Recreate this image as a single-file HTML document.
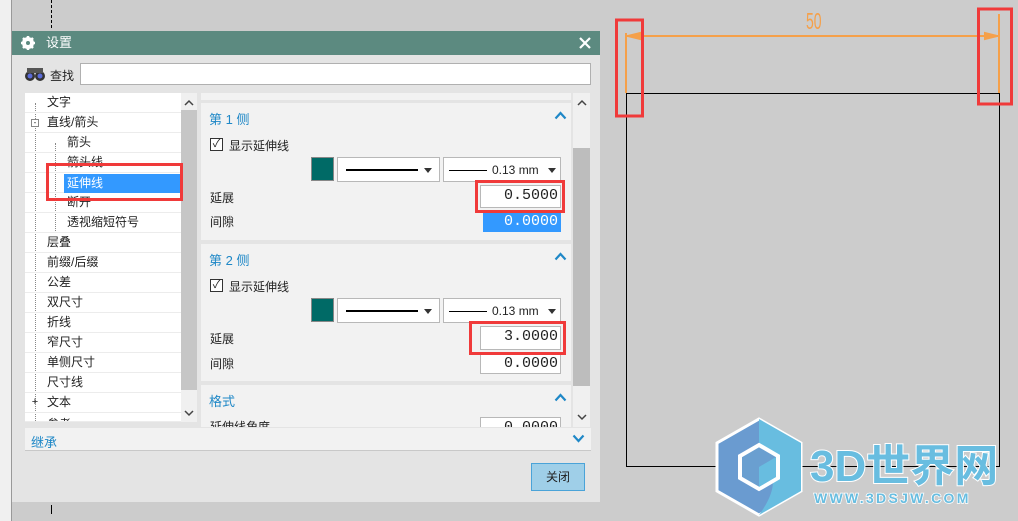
<!DOCTYPE html>
<html><head><meta charset="utf-8"><style>
*{margin:0;padding:0;box-sizing:border-box}
body{width:1018px;height:521px;background:#cccccc;position:relative;overflow:hidden;font-family:"Liberation Sans","Noto Sans CJK SC",sans-serif;font-size:12px;color:#222}
.a{position:absolute}
.row{position:absolute;left:25px;width:156px;height:20px;border-bottom:1px solid #ececec;line-height:19px;white-space:nowrap}
.sec{position:absolute;left:201px;width:370px;background:#f2f2f2}
.h{color:#1f88c7;font-size:13px}
.inp{position:absolute;background:#fff;border:1px solid #b8b8b8;text-align:right;font-family:"Liberation Mono","Noto Sans CJK SC",monospace;font-size:15px;line-height:20px;padding-right:2px;overflow:hidden;white-space:nowrap}
.dd{position:absolute;background:#fff;border:1px solid #b8b8b8;height:25px}
.rb{position:absolute;border:3px solid #f03a3a}
</style></head><body>
<div class="a" style="left:0;top:0;width:12px;height:521px;background:#f0f0f0;border-right:1px solid #999"></div>
<div class="a" style="left:51px;top:0;height:28px;border-left:1px dashed #000"></div>
<div class="a" style="left:51px;top:505px;height:9px;border-left:1px solid #000"></div>
<!-- dialog -->
<div class="a" style="left:12px;top:31px;width:588px;height:471px;background:#e4e4e4"></div>
<div class="a" style="left:12px;top:31px;width:588px;height:24px;background:#5c8a80;color:#fff;font-size:13px;line-height:24px">
<svg class="a" style="left:9px;top:5px" width="14" height="14" viewBox="0 0 14 14"><circle cx="7" cy="7" r="4.5" fill="none" stroke="#fff" stroke-width="3"/><g stroke="#fff" stroke-width="2.5"><line x1="7" y1="0" x2="7" y2="14"/><line x1="0" y1="7" x2="14" y2="7"/><line x1="2" y1="2" x2="12" y2="12"/><line x1="12" y1="2" x2="2" y2="12"/></g><circle cx="7" cy="7" r="2" fill="#5c8a80"/></svg>
<span class="a" style="left:34px">设置</span>
<svg class="a" style="left:567px;top:6px" width="12" height="12"><path d="M1 1L11 11M11 1L1 11" stroke="#fff" stroke-width="2.2"/></svg></div>
<svg class="a" style="left:24px;top:66px" width="22" height="16"><circle cx="6" cy="10" r="5" fill="#333"/><circle cx="16" cy="10" r="5" fill="#333"/><circle cx="6" cy="10" r="2.5" fill="#5a6ad8"/><circle cx="16" cy="10" r="2.5" fill="#5a6ad8"/><rect x="3" y="2" width="16" height="5" fill="#555"/></svg>
<div class="a" style="left:50px;top:67px;font-size:12px">查找</div>
<div class="a" style="left:80px;top:63px;width:511px;height:22px;background:#fff;border:1px solid #b0b0b0"></div>
<!-- tree -->
<div class="a" style="left:25px;top:93px;width:156px;height:329px;background:#fff"></div>
<div class="a" style="left:181px;top:93px;width:16px;height:329px;background:#f0f0f0"></div>
<div class="a" style="left:181px;top:110px;width:16px;height:280px;background:#c6c6c6"></div>
<svg class="a" style="left:184px;top:99px" width="10" height="7"><path d="M1 6L5 2L9 6" fill="none" stroke="#444" stroke-width="1.5"/></svg>
<svg class="a" style="left:184px;top:410px" width="10" height="7"><path d="M1 1L5 5L9 1" fill="none" stroke="#444" stroke-width="1.5"/></svg>
<div class="a" style="left:25px;top:93px;width:156px;height:329px;overflow:hidden">
<div class="a" style="left:10px;top:10px;height:320px;border-left:1px dotted #888"></div>
<div class="a" style="left:30px;top:50px;height:90px;border-left:1px dotted #888"></div>
</div>
<div class="row" style="top:93px;padding-left:22px">文字</div>
<div class="row" style="top:113px;padding-left:22px">直线/箭头</div>
<div class="a" style="left:31px;top:119px;width:8px;height:8px;border:1px solid #888;background:#fff;font-size:8px;line-height:6px;text-align:center">-</div>
<div class="row" style="top:133px;padding-left:42px">箭头</div>
<div class="row" style="top:153px;padding-left:42px">箭头线</div>
<div class="row" style="top:173px;padding-left:42px"><span class="a" style="left:39px;top:1px;width:116px;height:19px;background:#3399ff;color:#fff;padding-left:3px">延伸线</span></div>
<div class="row" style="top:193px;padding-left:42px">断开</div>
<div class="row" style="top:213px;padding-left:42px">透视缩短符号</div>
<div class="row" style="top:233px;padding-left:22px">层叠</div>
<div class="row" style="top:253px;padding-left:22px">前缀/后缀</div>
<div class="row" style="top:273px;padding-left:22px">公差</div>
<div class="row" style="top:293px;padding-left:22px">双尺寸</div>
<div class="row" style="top:313px;padding-left:22px">折线</div>
<div class="row" style="top:333px;padding-left:22px">窄尺寸</div>
<div class="row" style="top:353px;padding-left:22px">单侧尺寸</div>
<div class="row" style="top:373px;padding-left:22px">尺寸线</div>
<div class="row" style="top:393px;padding-left:22px">文本</div>
<div class="a" style="left:31px;top:399px;width:8px;height:8px;font-size:11px;line-height:7px;text-align:center">+</div>
<div class="row" style="top:413px;height:9px;padding-left:22px;overflow:hidden;line-height:22px">参考</div>
<div class="rb" style="left:46px;top:163px;width:137px;height:38px"></div>
<!-- right panel -->
<div class="a" style="left:201px;top:93px;width:370px;height:334px;background:#e4e4e4"></div>
<div class="sec" style="top:93px;height:7px"></div>
<div class="sec" style="top:103px;height:137px"></div>
<div class="sec" style="top:244px;height:137px"></div>
<div class="sec" style="top:385px;height:42px"></div>
<div class="a" style="left:573px;top:93px;width:17px;height:334px;background:#f0f0f0"></div>
<div class="a" style="left:573px;top:148px;width:17px;height:238px;background:#bdbdbd"></div>
<svg class="a" style="left:577px;top:99px" width="10" height="7"><path d="M1 6L5 2L9 6" fill="none" stroke="#444" stroke-width="1.5"/></svg>
<svg class="a" style="left:577px;top:414px" width="10" height="7"><path d="M1 1L5 5L9 1" fill="none" stroke="#444" stroke-width="1.5"/></svg>

<div class="a h" style="left:209px;top:109px">第 1 侧</div>
<svg class="a" style="left:554px;top:111px" width="13" height="9"><path d="M1.5 7.5L6.5 2L11.5 7.5" fill="none" stroke="#1f88c7" stroke-width="2.2"/></svg>
<div class="a" style="left:210px;top:138px;width:13px;height:13px;border:1px solid #333;background:#fff;font-size:11px;line-height:11px;text-align:center">✓</div>
<div class="a" style="left:229px;top:137px">显示延伸线</div>
<div class="a" style="left:311px;top:157px;width:23px;height:24px;background:#006a66;border:1px solid #888"></div>
<div class="dd" style="left:337px;top:157px;width:103px"><div class="a" style="left:8px;top:11px;width:72px;border-top:2px solid #000"></div><svg class="a" style="left:86px;top:10px" width="8" height="5"><path d="M0 0H8L4 5Z" fill="#333"/></svg></div>
<div class="dd" style="left:443px;top:157px;width:118px"><div class="a" style="left:5px;top:12px;width:38px;border-top:1px solid #000"></div><div class="a" style="left:48px;top:5px">0.13 mm</div><svg class="a" style="left:104px;top:10px" width="8" height="5"><path d="M0 0H8L4 5Z" fill="#333"/></svg></div>
<div class="a" style="left:210px;top:189px">延展</div>
<div class="inp" style="left:480px;top:185px;width:81px;height:23px">0.5000</div>
<div class="a" style="left:210px;top:213px">间隙</div>
<div class="inp" style="left:483px;top:212px;width:78px;height:20px;background:#3399ff;color:#fff;border-color:#3399ff;line-height:18px">0.0000</div>
<div class="rb" style="left:475px;top:180px;width:90px;height:33px"></div>

<div class="a h" style="left:209px;top:250px">第 2 侧</div>
<svg class="a" style="left:554px;top:252px" width="13" height="9"><path d="M1.5 7.5L6.5 2L11.5 7.5" fill="none" stroke="#1f88c7" stroke-width="2.2"/></svg>
<div class="a" style="left:210px;top:279px;width:13px;height:13px;border:1px solid #333;background:#fff;font-size:11px;line-height:11px;text-align:center">✓</div>
<div class="a" style="left:229px;top:278px">显示延伸线</div>
<div class="a" style="left:311px;top:298px;width:23px;height:24px;background:#006a66;border:1px solid #888"></div>
<div class="dd" style="left:337px;top:298px;width:103px"><div class="a" style="left:8px;top:11px;width:72px;border-top:2px solid #000"></div><svg class="a" style="left:86px;top:10px" width="8" height="5"><path d="M0 0H8L4 5Z" fill="#333"/></svg></div>
<div class="dd" style="left:443px;top:298px;width:118px"><div class="a" style="left:5px;top:12px;width:38px;border-top:1px solid #000"></div><div class="a" style="left:48px;top:5px">0.13 mm</div><svg class="a" style="left:104px;top:10px" width="8" height="5"><path d="M0 0H8L4 5Z" fill="#333"/></svg></div>
<div class="a" style="left:210px;top:330px">延展</div>
<div class="inp" style="left:480px;top:326px;width:81px;height:24px">3.0000</div>
<div class="a" style="left:210px;top:355px">间隙</div>
<div class="inp" style="left:480px;top:353px;width:81px;height:21px;line-height:19px">0.0000</div>
<div class="rb" style="left:469px;top:321px;width:97px;height:34px"></div>

<div class="a h" style="left:209px;top:391px">格式</div>
<svg class="a" style="left:554px;top:393px" width="13" height="9"><path d="M1.5 7.5L6.5 2L11.5 7.5" fill="none" stroke="#1f88c7" stroke-width="2.2"/></svg>
<div class="a" style="left:201px;top:416px;width:370px;height:11px;overflow:hidden"><span class="a" style="left:9px;top:2px">延伸线角度</span><div class="inp" style="left:279px;top:1px;width:81px;height:22px">0.0000</div></div>

<div class="a" style="left:25px;top:428px;width:566px;height:23px;background:#f2f2f2;border-bottom:1px solid #c8c8c8"></div>
<div class="a h" style="left:31px;top:432px">继承</div>
<svg class="a" style="left:572px;top:434px" width="13" height="9"><path d="M1.5 1.5L6.5 7L11.5 1.5" fill="none" stroke="#1f88c7" stroke-width="2.2"/></svg>
<div class="a" style="left:531px;top:463px;width:54px;height:28px;background:#9fcfe8;border:1px solid #4aa3d8;text-align:center;line-height:26px">关闭</div>

<!-- drawing -->
<svg class="a" style="left:600px;top:0" width="418" height="521">
<rect x="26.5" y="93.5" width="373" height="373" fill="none" stroke="#000" stroke-width="1"/>
<g stroke="#f5a04a" stroke-width="2" fill="#f5a04a">
<line x1="26" y1="33" x2="26" y2="93"/><line x1="399" y1="14" x2="399" y2="93"/>
<line x1="26" y1="36" x2="399" y2="36"/>
<path d="M28 36 L40 33 L40 39Z"/><path d="M397 36 L385 33 L385 39Z"/>
</g>
<text transform="translate(206,29) scale(0.7,1.15)" fill="#f5a04a" font-size="20" font-family="Liberation Sans">50</text>
<rect x="16.5" y="20" width="26" height="96" fill="none" stroke="#f03a3a" stroke-width="3"/>
<rect x="378.5" y="9" width="33" height="95" fill="none" stroke="#f03a3a" stroke-width="3"/>
<!-- logo -->
<g transform="translate(159,467)">
<polygon points="0,-48 42,-24 42,24 0,48 -42,24 -42,-24" fill="#6a9bd0" stroke="#fff" stroke-width="3"/>
<path d="M0,-48 42,-24 42,24 0,48 Q28,10 0,-10Z" fill="#68bde0"/>
<polygon points="0,-22 19,-11 19,11 0,22 -19,11 -19,-11" fill="#6a9fd0" stroke="#fff" stroke-width="4"/>
<polygon points="0,0 17,-10 17,10 0,20" fill="#68bde0"/>
</g>
<text x="210" y="481" fill="#68bde0" stroke="#fff" stroke-width="2" paint-order="stroke" font-size="44" font-weight="bold" font-family="Liberation Sans, Noto Sans CJK SC, sans-serif">3D世界网</text>
<text x="214" y="503" fill="#68bde0" stroke="#fff" stroke-width="1.5" paint-order="stroke" font-size="14" font-weight="bold" letter-spacing="2.3" font-family="Liberation Sans, sans-serif">WWW.3DSJW.COM</text>
</svg>
</body></html>
